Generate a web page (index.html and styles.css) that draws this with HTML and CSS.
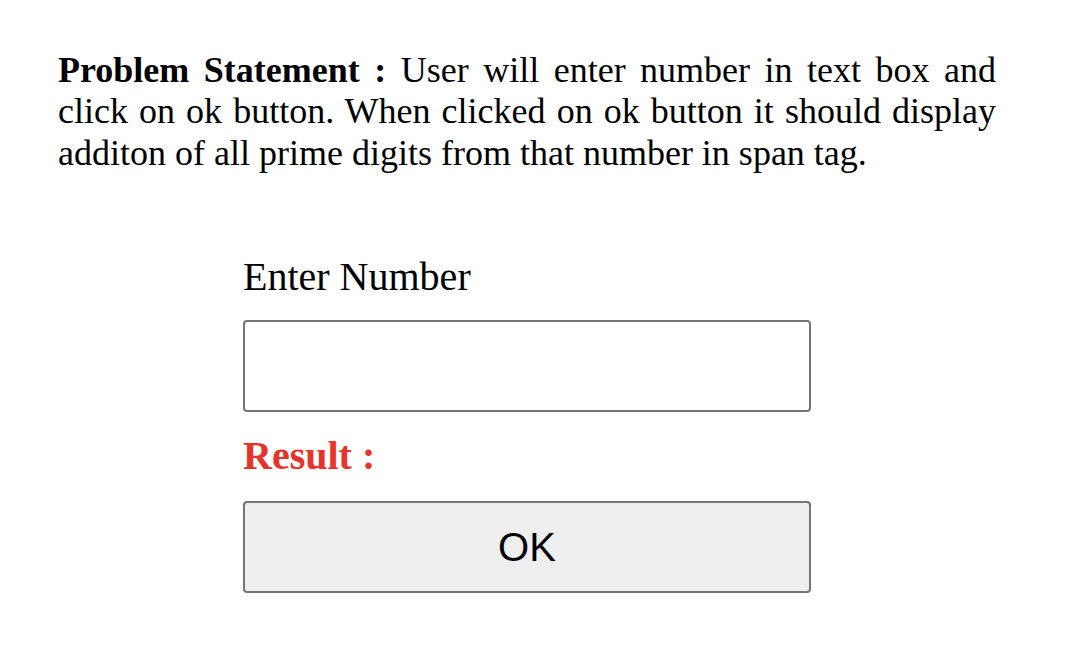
FILE: index.html
```html
<!DOCTYPE html>
<html>
<head>
<meta charset="utf-8">
<link rel="stylesheet" href="styles.css">
</head>
<body>
<div class="page">
  <p class="problem"><b>Problem Statement :</b> User will enter number in text box and click on ok button. When clicked on ok button it should display additon of all prime digits from that number in span tag.</p>
  <div class="form">
    <label class="label" for="num">Enter Number</label>
    <input class="field" id="num" type="text">
    <div class="result">Result : <span id="out"></span></div>
    <button class="ok" type="button">OK</button>
  </div>
</div>
</body>
</html>
```
FILE: styles.css
```css
html, body {
  margin: 0;
  padding: 0;
  background: #fff;
}
.page {
  padding: 50px 84px 0 58px;
  font-family: "Liberation Serif", "Times New Roman", serif;
  color: #000;
}
.problem {
  margin: 0;
  font-size: 36px;
  line-height: 41.4px;
  text-align: justify;
}
.form {
  margin: 80px 0 0 185px;
  width: 568px;
  display: flex;
  flex-direction: column;
}
.label {
  font-size: 40px;
  line-height: 46px;
}
.field {
  box-sizing: border-box;
  margin-top: 20px;
  width: 568px;
  height: 92px;
  border: 2px solid #767676;
  border-radius: 4px;
  background: #fff;
  font-size: 32px;
  padding: 0 10px;
}
.result {
  margin-top: 21px;
  font-size: 40px;
  line-height: 46px;
  font-weight: bold;
  color: #e8332a;
}
.ok {
  box-sizing: border-box;
  margin-top: 22px;
  width: 568px;
  height: 92px;
  border: 2px solid #767676;
  border-radius: 4px;
  background: #efefef;
  font-family: "Liberation Sans", Arial, sans-serif;
  font-size: 40px;
  color: #000;
}
```
